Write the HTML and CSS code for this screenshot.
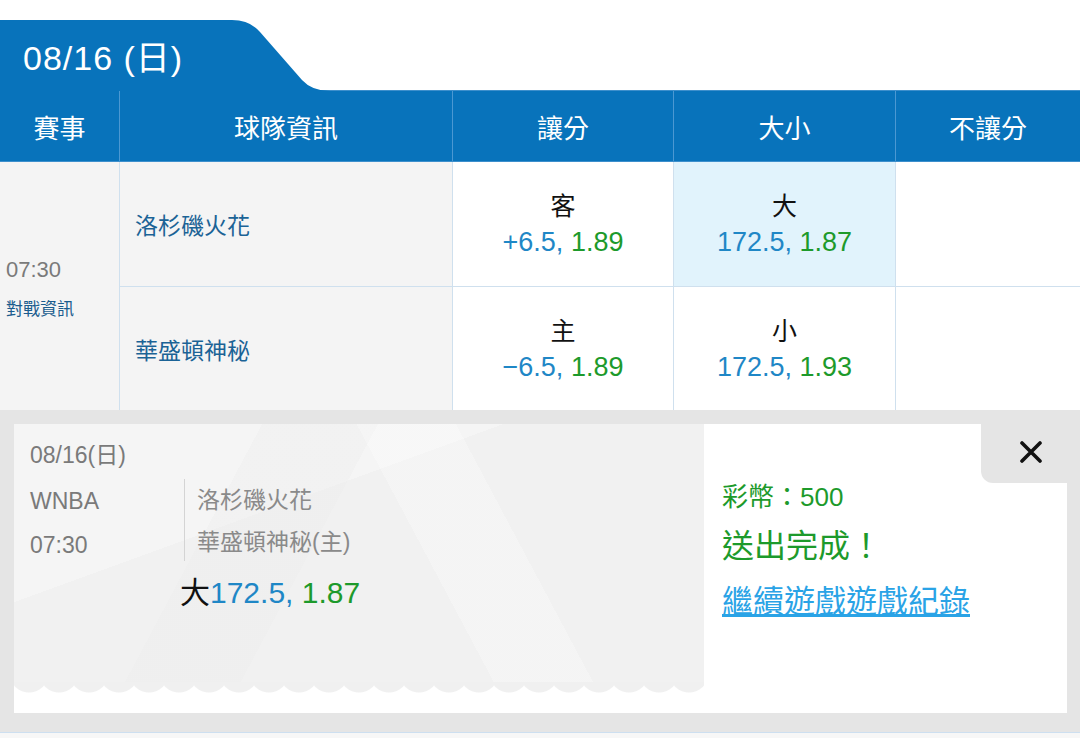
FILE: index.html
```html
<!DOCTYPE html>
<html lang="zh-Hant">
  <head>
    <meta charset="utf-8">
    <title>WNBA 08/16</title>
    <link rel="stylesheet" href="styles.css">
  </head>

  <body>
    <div class="Board">
      <!-- date tab -->
      <div class="tab">08/16 (日)</div>

      <!-- table head -->
      <div class="head">
        <div>賽事</div>
        <div>球隊資訊</div>
        <div>讓分</div>
        <div>大小</div>
        <div>不讓分</div>
      </div>

      <!-- one game, two rows -->
      <div class="game">
        <div class="info">
          <span class="time">07:30</span>
          <span class="versus">對戰資訊</span>
        </div>
        <div class="team">洛杉磯火花</div>
        <div class="odd">
          <span class="pick">客</span>
          <span><span class="line">+6.5,</span> <span class="price">1.89</span></span>
        </div>
        <div class="odd chosen">
          <span class="pick">大</span>
          <span><span class="line">172.5,</span> <span class="price">1.87</span></span>
        </div>
        <div class="odd"></div>

        <div class="team">華盛頓神秘</div>
        <div class="odd">
          <span class="pick">主</span>
          <span><span class="line">&minus;6.5,</span> <span class="price">1.89</span></span>
        </div>
        <div class="odd">
          <span class="pick">小</span>
          <span><span class="line">172.5,</span> <span class="price">1.93</span></span>
        </div>
        <div class="odd"></div>
      </div>

      <!-- bet slip popup -->
      <div class="popup">
        <div class="ticket">
          <div class="slip">
            <div class="date">08/16(日)</div>
            <div class="match">
              <div class="league">
                <span>WNBA</span>
                <span>07:30</span>
              </div>
              <div class="teams">
                <span>洛杉磯火花</span>
                <span>華盛頓神秘(主)</span>
              </div>
            </div>
            <div class="bet">大<span class="line">172.5,</span> <span class="price">1.87</span></div>
          </div>

          <div class="result">
            <button class="close" type="button">
              <svg width="22" height="22" viewBox="0 0 22 22">
                <path d="M2 2 L20 20 M20 2 L2 20" stroke="#111" stroke-width="3.6" stroke-linecap="round" />
              </svg>
            </button>
            <p class="coins">彩幣：500</p>
            <p class="done">送出完成！</p>
            <a class="more" href="#">繼續遊戲遊戲紀錄</a>
          </div>
        </div>
      </div>

      <div class="nextRow"></div>
    </div>
  </body>
</html>
```

FILE: styles.css
```css
body {
  margin: 0;
  background: #fff;
  font-family: "Liberation Sans", "Noto Sans CJK TC", sans-serif;
}

.Board {
  width: 1080px;
  padding-top: 20px;
}

/* date tab */
.tab {
  position: relative;
  width: 330px;
  height: 71px;
  margin-bottom: -1px;
  padding-left: 23px;
  box-sizing: border-box;
  display: flex;
  align-items: center;
  color: #fff;
  font-size: 34px;
  letter-spacing: 1px;
  background: #0873bb;
  clip-path: path("M0 0 H232 Q250 0 260 12 L302 60 Q312 71 330 71 H0 Z");
}

/* head */
.head {
  display: grid;
  grid-template-columns: 119px 332px 220px 221px 1fr;
  gap: 1px;
  height: 70px;
  background: #4b98d2;
  border-top: 1px solid #3d8fcc;
  border-bottom: 1px solid #3d8fcc;
}

.head div {
  display: flex;
  align-items: center;
  justify-content: center;
  background: #0873bb;
  color: #fff;
  font-size: 26px;
}

/* game rows */
.game {
  display: grid;
  grid-template-columns: 119px 332px 220px 221px 1fr;
  grid-template-rows: 124px 123px;
  gap: 1px;
  background: #cfe0ee;
}

.info {
  grid-row: span 2;
  display: flex;
  flex-direction: column;
  justify-content: center;
  gap: 12px;
  padding: 4px 0 0 6px;
  background: #f4f4f4;
}

.time {
  color: #7a7a7a;
  font-size: 22px;
}

.versus {
  color: #1a5c8e;
  font-size: 17px;
}

.team {
  display: flex;
  align-items: center;
  padding-left: 15px;
  background: #f4f4f4;
  color: #1b6396;
  font-size: 23px;
}

.odd {
  display: flex;
  flex-direction: column;
  align-items: center;
  justify-content: center;
  line-height: 36px;
  background: #fff;
  font-size: 27px;
}

.odd.chosen {
  background: #e1f3fc;
}

.pick {
  color: #111;
  font-size: 25px;
}

.line {
  color: #1f87c6;
}

.price {
  color: #1d9a2b;
}

/* popup */
.popup {
  padding: 14px 13px 19px 14px;
  background: #e5e5e5;
}

.ticket {
  display: flex;
  height: 289px;
  background: #fff;
}

.slip {
  position: relative;
  width: 690px;
  height: 258px;
  padding: 16px 0 0 16px;
  box-sizing: border-box;
  background:
    linear-gradient(62deg, transparent 58%, rgba(255, 255, 255, 0.25) 58%, rgba(255, 255, 255, 0.25) 70%, transparent 70%),
    linear-gradient(118deg, transparent 30%, rgba(236, 236, 236, 0.35) 30%, rgba(236, 236, 236, 0.35) 44%, transparent 44%),
    linear-gradient(160deg, rgba(255, 255, 255, 0.3) 0 35%, transparent 35%),
    #f1f1f1;
  color: #7a7a7a;
  font-size: 23px;
}

.slip::after {
  content: "";
  position: absolute;
  left: 0;
  right: 0;
  bottom: -11px;
  height: 11px;
  background: radial-gradient(circle at 50% -9px, #f0f0f0 19px, transparent 20px);
  background-size: 30px 11px;
}

.date {
  line-height: 30px;
}

.match {
  display: flex;
  margin-top: 9px;
}

.league {
  display: flex;
  flex-direction: column;
  width: 154px;
  line-height: 44px;
}

.teams {
  display: flex;
  flex-direction: column;
  height: 82px;
  padding-left: 12px;
  line-height: 42px;
  border-left: 1px solid #d4d4d4;
  color: #8a8a8a;
}

.bet {
  margin: 6px 0 0 150px;
  line-height: 40px;
  color: #111;
  font-size: 30px;
}

/* result side */
.result {
  flex: 1;
  display: flex;
  flex-direction: column;
  align-items: flex-start;
  padding-left: 18px;
}

.close {
  align-self: flex-end;
  width: 86px;
  height: 59px;
  border: none;
  border-bottom-left-radius: 12px;
  background: #e5e5e5;
  display: flex;
  align-items: center;
  justify-content: center;
  padding: 0 0 4px 14px;
  cursor: pointer;
}

.result p {
  margin: 0;
  color: #1d9a2b;
}

.coins {
  line-height: 28px;
  font-size: 26px;
}

.done {
  margin-top: 12px !important;
  line-height: 46px;
  font-size: 32px;
}

.more {
  margin-top: 15px;
  line-height: 36px;
  color: #2aa3e6;
  font-size: 31px;
}

.nextRow {
  height: 6px;
  border-top: 1px solid #cddff0;
  background: #f7f7f7;
}
```
